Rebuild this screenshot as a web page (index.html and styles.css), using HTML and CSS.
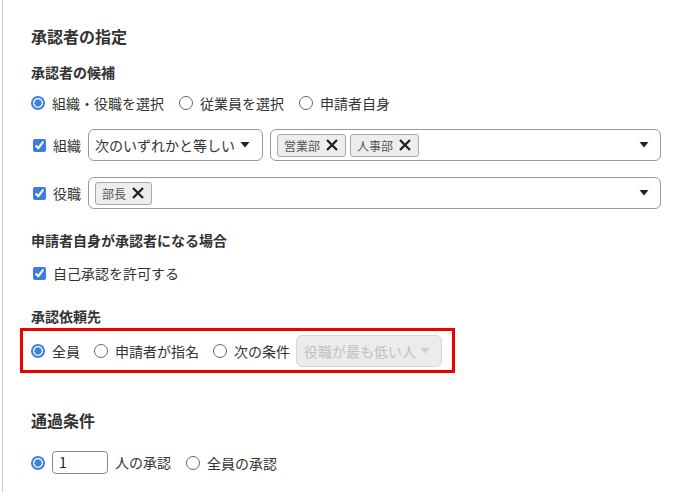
FILE: index.html
```html
<!DOCTYPE html>
<html lang="ja">
<head>
<meta charset="utf-8">
<link rel="stylesheet" href="styles.css">
</head>
<body>
<div class="page">
  <h1 class="title">承認者の指定</h1>

  <h2 class="sub first">承認者の候補</h2>
  <div class="opts row-radio">
    <label class="opt"><input type="radio" name="cand" checked><span>組織・役職を選択</span></label>
    <label class="opt"><input type="radio" name="cand"><span>従業員を選択</span></label>
    <label class="opt"><input type="radio" name="cand"><span>申請者自身</span></label>
  </div>

  <div class="field-row row-org">
    <label class="chk"><input type="checkbox" checked><span>組織</span></label>
    <div class="select cond">
      <span>次のいずれかと等しい</span>
      <svg class="arrow" width="10" height="6" viewBox="0 0 10 6"><polygon points="0.5,0 9.5,0 5,5.5" fill="#222"/></svg>
    </div>
    <div class="select multi">
      <div class="tags">
        <span class="tag">営業部<svg class="x" width="12" height="12" viewBox="0 0 12 12"><path d="M1 1L11 11M11 1L1 11" stroke="#222" stroke-width="2.3"/></svg></span>
        <span class="tag">人事部<svg class="x" width="12" height="12" viewBox="0 0 12 12"><path d="M1 1L11 11M11 1L1 11" stroke="#222" stroke-width="2.3"/></svg></span>
      </div>
      <svg class="arrow" width="10" height="6" viewBox="0 0 10 6"><polygon points="0.5,0 9.5,0 5,5.5" fill="#222"/></svg>
    </div>
  </div>

  <div class="field-row row-pos">
    <label class="chk"><input type="checkbox" checked><span>役職</span></label>
    <div class="select multi">
      <div class="tags">
        <span class="tag">部長<svg class="x" width="12" height="12" viewBox="0 0 12 12"><path d="M1 1L11 11M11 1L1 11" stroke="#222" stroke-width="2.3"/></svg></span>
      </div>
      <svg class="arrow" width="10" height="6" viewBox="0 0 10 6"><polygon points="0.5,0 9.5,0 5,5.5" fill="#222"/></svg>
    </div>
  </div>

  <h2 class="sub self">申請者自身が承認者になる場合</h2>
  <div class="opts row-self">
    <label class="chk"><input type="checkbox" checked><span>自己承認を許可する</span></label>
  </div>

  <h2 class="sub req">承認依頼先</h2>
  <div class="highlight">
    <label class="opt"><input type="radio" name="req" checked><span>全員</span></label>
    <label class="opt"><input type="radio" name="req"><span>申請者が指名</span></label>
    <label class="opt last"><input type="radio" name="req"><span>次の条件</span></label>
    <div class="select disabled">
      <span>役職が最も低い人</span>
      <svg class="arrow" width="10" height="6" viewBox="0 0 10 6"><polygon points="0.5,0 9.5,0 5,5.5" fill="#cfcfcf"/></svg>
    </div>
  </div>

  <h1 class="title pass">通過条件</h1>
  <div class="opts row-pass">
    <label class="opt num"><input type="radio" name="pass" checked><span class="numbox">1</span><span class="unit">人の承認</span></label>
    <label class="opt"><input type="radio" name="pass"><span>全員の承認</span></label>
  </div>
</div>
</body>
</html>
```

FILE: styles.css
```css
* { box-sizing: border-box; }
html, body { margin: 0; padding: 0; background: #fff; }
body {
  font-family: "Noto Sans CJK JP", "Noto Sans", sans-serif;
  color: #333;
  font-size: 14px;
}
.page {
  margin-left: 2px;
  border-left: 1px solid #cfcfcf;
  padding-left: 28px;
  min-height: 492px;
  overflow: hidden;
}
.title {
  margin: 24px 0 0;
  font-size: 16px;
  line-height: 24px;
  font-weight: 700;
  color: #333;
}
.title.pass { margin-top: 35px; }
.sub {
  margin: 0;
  font-size: 14px;
  line-height: 20px;
  font-weight: 700;
  color: #333;
}
.sub.first { margin-top: 14px; }
.sub.self { margin-top: 21px; }
.sub.req { margin-top: 23px; }

.opts {
  display: flex;
  align-items: center;
  height: 20px;
}
.row-radio { margin-top: 11px; }
.row-self { margin-top: 13px; }

.opt, .chk {
  display: flex;
  align-items: center;
  line-height: 20px;
  white-space: nowrap;
}
.opt { margin-right: 15px; }

input[type=radio] {
  -webkit-appearance: none;
  appearance: none;
  margin: 0 7px 0 0;
  width: 14px;
  height: 14px;
  border: 1.5px solid #666;
  border-radius: 50%;
  background: #fff;
  flex: none;
}
input[type=radio]:checked {
  border: 2px solid #3b7de0;
  background: radial-gradient(circle, #3b7de0 0 3.4px, #fff 3.9px);
}
input[type=checkbox] {
  margin: 0 7px 0 2px;
  width: 13px;
  height: 13px;
  accent-color: #3b7de0;
  flex: none;
}

.field-row {
  display: flex;
  align-items: center;
  height: 32px;
}
.row-org { margin-top: 16px; }
.row-pos { margin-top: 16px; }
.field-row .chk { width: 57px; flex: none; }

.select {
  display: flex;
  align-items: center;
  height: 32px;
  border: 1px solid #999;
  border-radius: 6px;
  background: #fff;
  font-size: 14px;
}
.select.cond {
  width: 175px;
  padding: 0 12px 0 6px;
  justify-content: space-between;
  margin-right: 7px;
  flex: none;
}
.select.multi {
  width: 391px;
  padding: 0 11px 0 6px;
  justify-content: space-between;
  flex: none;
}
.row-pos .select.multi { width: 573px; }
.tags { display: flex; gap: 4px; }
.tag {
  display: flex;
  align-items: center;
  height: 23px;
  padding: 0 7px 0 6px;
  border: 1px solid #a8a8a8;
  border-radius: 3px;
  background: #ededed;
  font-size: 12px;
  color: #555;
}
.tag .x { margin-left: 6px; }
.arrow { flex: none; }

.highlight {
  display: flex;
  align-items: center;
  margin: 2px 0 0 -11px;
  width: 435px;
  height: 45px;
  border: 3px solid #ee0000;
  padding: 0 8px;
}
.highlight .opt { margin-right: 14px; }
.highlight .opt.last { margin-right: 6px; }
.select.disabled {
  width: 146px;
  height: 32px;
  background: #ececec;
  border-color: #d6d6d6;
  color: #c0c0c0;
  padding: 0 11px 0 7px;
  justify-content: space-between;
  flex: none;
}

.row-pass { margin-top: 19px; height: 23px; }
.row-pass input[type=radio] { margin-right: 7px; }
.numbox {
  display: inline-block;
  width: 56px;
  height: 23px;
  border: 1px solid #888;
  border-radius: 4px;
  padding-left: 6px;
  line-height: 21px;
  font-size: 14px;
  color: #222;
}
.unit { margin-left: 7px; position: relative; top: -1px; }
.opt.num { margin-right: 15px; }
```
